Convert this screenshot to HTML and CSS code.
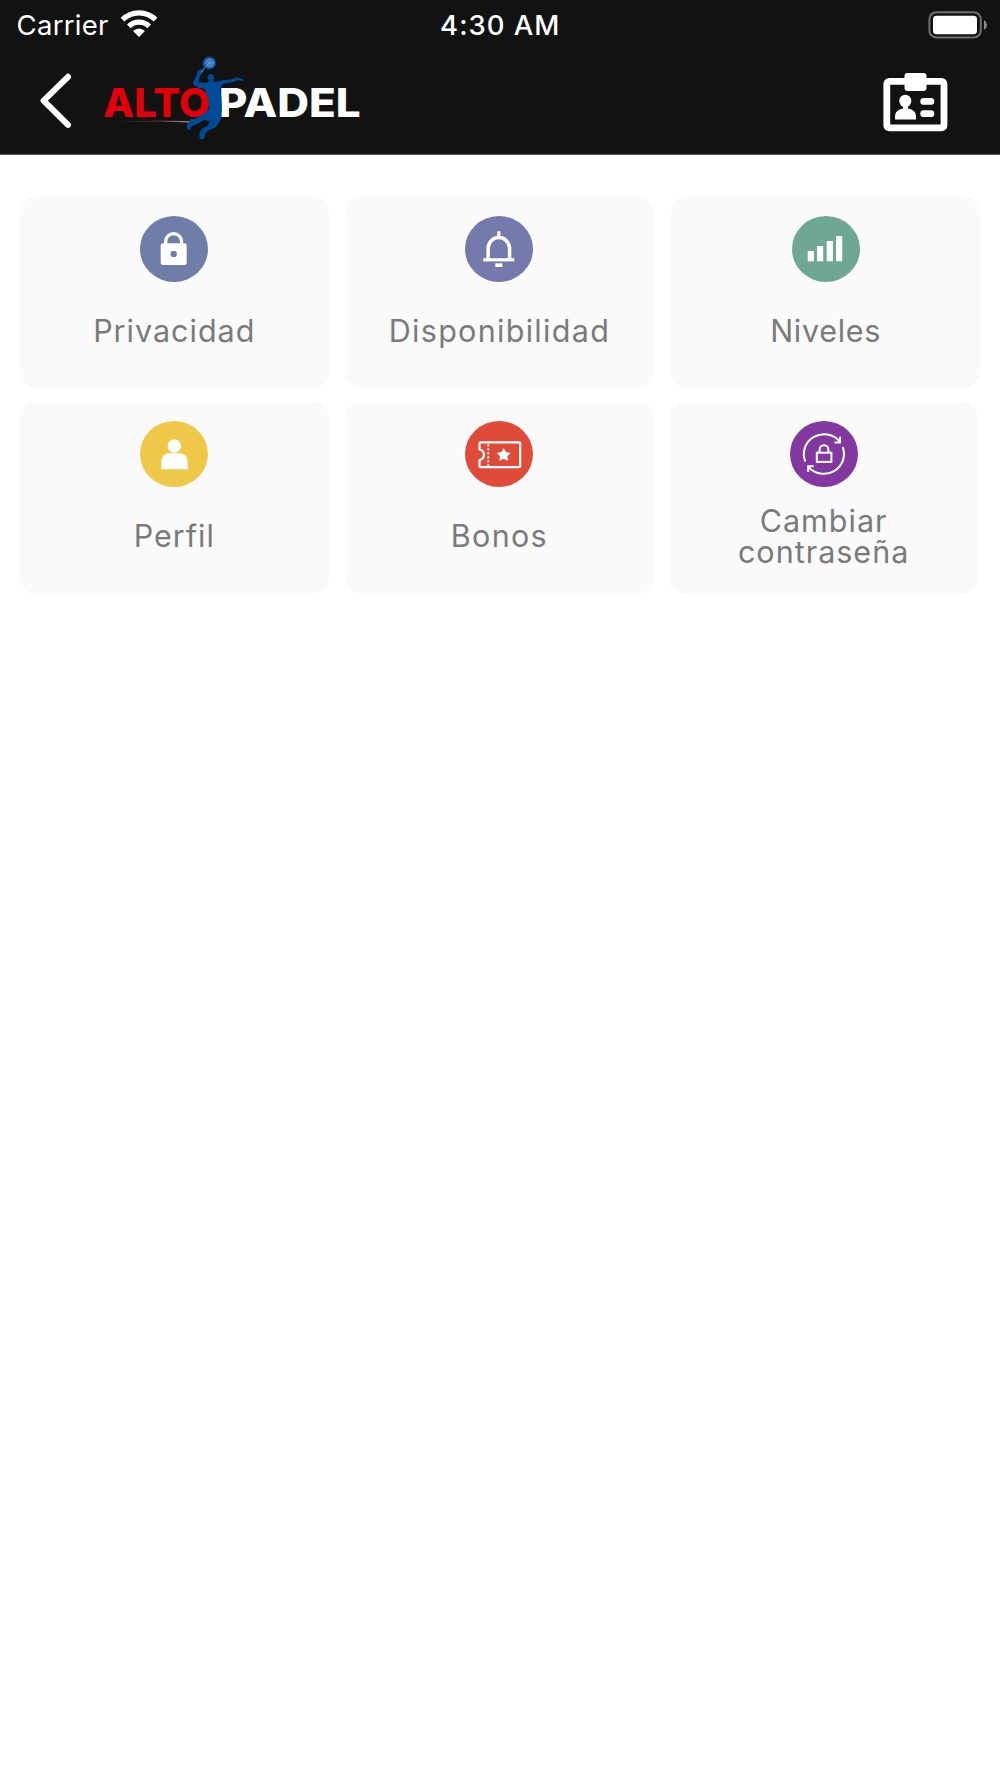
FILE: index.html
```html
<!DOCTYPE html>
<html lang="es">
<head>
    <meta charset="UTF-8">
    <meta name="viewport" content="width=device-width, initial-scale=1.0">
    <title>Alto Padel</title>
    <link rel="stylesheet" href="styles.css">
</head>
<body>
    <header class="header">
        <div class="status-bar">
            <div class="status-left">
                <span class="carrier">Carrier</span>
                <svg class="wifi" width="38" height="28" viewBox="0 0 38 28">
                    <path d="M2.5 9.7 A23.3 23.3 0 0 1 35.5 9.7" fill="none" stroke="#fff" stroke-width="5.2"/>
                    <path d="M8.8 16.3 A14.4 14.4 0 0 1 29.2 16.3" fill="none" stroke="#fff" stroke-width="5.2"/>
                    <path d="M19 27 L13 21 Q19 15.8 25 21 Z" fill="#fff"/>
                </svg>
            </div>
            <span class="time">4:30 AM</span>
            <div class="status-right">
                <svg width="60" height="28" viewBox="0 0 60 28">
                    <rect x="1.4" y="1.2" width="51.4" height="25.4" rx="7" fill="none" stroke="#6f6f6f" stroke-width="2"/>
                    <rect x="5" y="4.7" width="44" height="18.6" rx="3.5" fill="#fff"/>
                    <path d="M56 9 Q59 11 59 14 Q59 17 56 19 Z" fill="#8a8a8a"/>
                </svg>
            </div>
        </div>

        <nav class="nav-bar">
            <div class="nav-left">
                <svg class="back" width="34" height="58" viewBox="0 0 34 58">
                    <path d="M30 4.8 L5.6 28.6 L30 52.8" fill="none" stroke="#fff" stroke-width="6" stroke-linecap="round" stroke-linejoin="round"/>
                </svg>
                <svg class="logo" width="290" height="95" viewBox="0 0 870 285">
                    <text class="logo-text" x="40" y="200" textLength="320" lengthAdjust="spacingAndGlyphs" fill="#e3000b">ALTO</text>
                    <text class="logo-text" x="386" y="200" textLength="426" lengthAdjust="spacingAndGlyphs" fill="#fff">PADEL</text>
                    <path d="M85 214 L210 212 L300 213 L300 218 L210 214 Z" fill="#8d7468"/>
                    <!-- player -->
                    <path d="M331 57 L338 62 L336 70 L331 76 L325 97 L349 99 L357 92 L352 82 L355 75 L362 71 L370 76 L372 85 L369 93 L377 96 L400 91 L425 88 L440 82 L460 88 L461 94 L444 90 L428 97 L398 102 L390 118 L394 140 L396 171 L394 204 L386 219 L375 233 L357 240 L347 250 L343 264 L335 269 L328 263 L329 246 L338 235 L351 229 L361 214 L341 210 L323 222 L306 227 L301 239 L293 239 L289 226 L297 218 L300 207 L308 208 L323 203 L343 191 L356 176 L356 153 L350 133 L342 116 L326 114 L309 103 L311 94 L320 76 L321 65 Z" fill="#004a98"/>
                    <path d="M345 51 L334 68" stroke="#4c79b5" stroke-width="4"/>
                    <ellipse cx="358" cy="39" rx="19" ry="18" fill="#1359a5" stroke="#004a98" stroke-width="3"/>
                    <circle cx="359" cy="39" r="10" fill="none" stroke="#5f92c9" stroke-width="7" stroke-dasharray="5 2"/>
                    <circle cx="359" cy="39" r="6" fill="#5f92c9"/>
                </svg>
            </div>
            <svg class="card-button" width="66" height="62" viewBox="0 0 66 62">
                <rect x="4.8" y="9.4" width="57.2" height="46.4" rx="2.5" fill="none" stroke="#fff" stroke-width="6.8"/>
                <rect x="22.5" y="1" width="22" height="18" rx="3" fill="#fff"/>
                <ellipse cx="23.3" cy="29" rx="6" ry="6.3" fill="#fff"/>
                <path d="M21 32 H26 V36.5 Q34 38 34 44 V47.5 H13 V44 Q13 38 21 36.5 Z" fill="#fff"/>
                <rect x="38.3" y="26" width="14" height="6.8" rx="3.4" fill="#fff"/>
                <rect x="38.3" y="38.3" width="14" height="6.8" rx="3.4" fill="#fff"/>
            </svg>
        </nav>
    </header>

    <main class="menu">
        <div class="menu-row">
            <div class="card">
                <svg class="icon" viewBox="0 0 68 66">
                    <ellipse cx="34" cy="33" rx="34" ry="33" fill="#6f7ea9"/>
                    <path d="M25.7 29 V25.5 A7.9 7.9 0 0 1 41.5 25.5 V29" fill="none" stroke="#fff" stroke-width="3.2"/>
                    <rect x="20.7" y="27.3" width="26" height="21.7" rx="2.5" fill="#fff"/>
                    <circle cx="33.7" cy="38" r="3.2" fill="#6f7ea9"/>
                </svg>
                <p class="label">Privacidad</p>
            </div>
            <div class="card">
                <svg class="icon" viewBox="0 0 68 66">
                    <ellipse cx="34" cy="33" rx="34" ry="33" fill="#757aad"/>
                    <path d="M23.1 43 V31.5 A10.8 11 0 0 1 44.6 31.5 V43" fill="none" stroke="#fff" stroke-width="3.5"/>
                    <rect x="18.3" y="42.2" width="31" height="3.2" fill="#fff"/>
                    <rect x="32.2" y="15.3" width="3.3" height="5" fill="#fff"/>
                    <rect x="30.3" y="47.3" width="7" height="3.7" fill="#fff"/>
                </svg>
                <p class="label wide">Disponibilidad</p>
            </div>
            <div class="card">
                <svg class="icon" viewBox="0 0 68 66">
                    <ellipse cx="34" cy="33" rx="34" ry="33" fill="#6ea894"/>
                    <path d="M15.7 35 h6.2 v10.3 h-6.2 Z M25 30 h6.2 v15.3 h-6.2 Z M34.7 25 h6.2 v20.3 h-6.2 Z M44 20 h6.2 v25.3 h-6.2 Z" fill="#fff"/>
                </svg>
                <p class="label narrow">Niveles</p>
            </div>
        </div>

        <div class="menu-row second">
            <div class="card">
                <svg class="icon" viewBox="0 0 68 66">
                    <ellipse cx="34" cy="33" rx="34" ry="33" fill="#efc849"/>
                    <circle cx="34.3" cy="25" r="6.7" fill="#fff"/>
                    <path d="M21.3 48.3 V41 Q21.3 32.3 30 32.3 H39 Q47.7 32.3 47.7 41 V48.3 Z" fill="#fff"/>
                </svg>
                <p class="label">Perfil</p>
            </div>
            <div class="card">
                <svg class="icon" viewBox="0 0 68 66">
                    <ellipse cx="34" cy="33" rx="34" ry="33" fill="#e04b39"/>
                    <path d="M14.5 28.5 V22.5 Q14.5 21.4 15.6 21.4 H54 Q55.2 21.4 55.2 22.5 V45 Q55.2 46.1 54 46.1 H15.6 Q14.5 46.1 14.5 45 V39 Q19 38 19 33.8 Q19 29.5 14.5 28.5 Z" fill="none" stroke="#fff" stroke-width="2.2" stroke-linejoin="round"/>
                    <path d="M23.3 23.2 V45" stroke="#fff" stroke-width="1.8" stroke-dasharray="2.4 1.6"/>
                    <path d="M38.7 28 L40.6 31.7 L44.6 32.3 L41.7 35.1 L42.4 39 L38.7 37.2 L35 39 L35.7 35.1 L32.8 32.3 L36.8 31.7 Z" fill="#fff" stroke="#fff" stroke-width="1.2" stroke-linejoin="round"/>
                </svg>
                <p class="label wide">Bonos</p>
            </div>
            <div class="card">
                <svg class="icon" viewBox="0 0 68 66">
                    <ellipse cx="34" cy="33" rx="34" ry="33" fill="#83389f"/>
                    <g fill="none" stroke="#fff" stroke-width="2">
                        <path d="M15.3 40.5 A20.2 19.8 0 0 1 49.8 20.7"/>
                        <path d="M44.5 21.4 H50 V15.8"/>
                        <path d="M52.7 26 A20.2 19.8 0 0 1 18.4 45.8"/>
                        <path d="M18.2 51 V45.3 H23.7"/>
                        <rect x="26.8" y="31.7" width="14.6" height="9.2"/>
                        <path d="M29.6 31.5 V28.6 A4.4 4.3 0 0 1 38.4 28.6 V31.5"/>
                    </g>
                </svg>
                <p class="label">Cambiar<br>contraseña</p>
            </div>
        </div>
    </main>
</body>
</html>
```
FILE: styles.css
```css
* {
    box-sizing: border-box;
}

body {
    margin: 0;
    min-height: 1778px;
    background-color: #fff;
    font-family: Inter, "Liberation Sans", sans-serif;
}

svg {
    display: block;
    flex-shrink: 0;
}

.header {
    height: 155px;
    background-color: #121212;
    border-bottom: 1px solid #555;
    color: #fff;
}

.status-bar {
    display: grid;
    grid-template-columns: 1fr auto 1fr;
    align-items: center;
    height: 50px;
    padding: 0 12px 0 16.5px;
    font-size: 27.5px;
    line-height: 50px;
}

.status-left {
    display: flex;
    align-items: center;
    gap: 11px;
}

.carrier {
    letter-spacing: 0.3px;
}

.wifi {
    margin-bottom: 3px;
}

.time {
    margin-right: 4px;
    font-weight: 500;
    letter-spacing: 1px;
}

.status-right {
    display: flex;
    justify-content: flex-end;
}

.nav-bar {
    display: flex;
    justify-content: space-between;
    height: 104px;
    padding: 0 52px 0 38px;
}

.nav-left {
    display: flex;
}

.back {
    margin: 22px 18px 0 0;
}

.logo-text {
    font-family: Inter, sans-serif;
    font-size: 118px;
    font-weight: 800;
}

.card-button {
    margin-top: 22px;
}

.menu {
    display: flex;
    flex-direction: column;
    gap: 12px;
    padding: 41px 19px 0 19.5px;
}

.menu-row {
    display: flex;
    gap: 15.7px;
}

.card {
    display: flex;
    flex-direction: column;
    align-items: center;
    width: 309.5px;
    height: 193px;
    padding-top: 20px;
    border-radius: 17px;
    background-color: #fafafa;
}

.card:last-child {
    margin-left: 1px;
}

.second .card:last-child {
    margin-left: -1px;
}

.icon {
    width: 68px;
    height: 66px;
}

.label {
    display: flex;
    flex-direction: column;
    justify-content: center;
    height: 97px;
    margin: 0;
    color: #7a7a7a;
    font-size: 30.5px;
    font-weight: 400;
    line-height: 31px;
    letter-spacing: 1px;
    text-align: center;
}

.label.wide {
    letter-spacing: 1.3px;
}

.label.narrow {
    letter-spacing: 0.7px;
}
```
